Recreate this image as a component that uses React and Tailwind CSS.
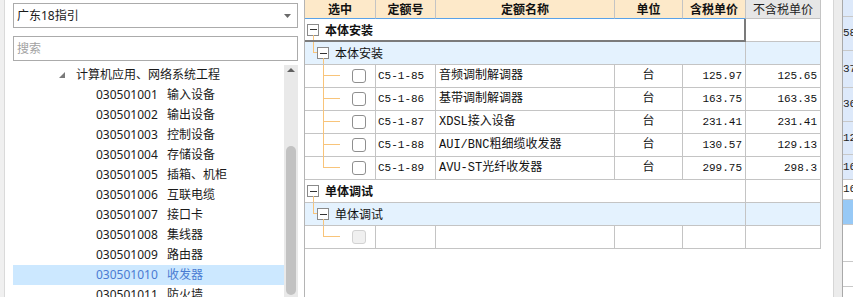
import React from 'react'

/* ── Data ── */
const TREE_ITEMS = [
  ['030501001', '输入设备'],
  ['030501002', '输出设备'],
  ['030501003', '控制设备'],
  ['030501004', '存储设备'],
  ['030501005', '插箱、机柜'],
  ['030501006', '互联电缆'],
  ['030501007', '接口卡'],
  ['030501008', '集线器'],
  ['030501009', '路由器'],
  ['030501010', '收发器'],
  ['030501011', '防火墙'],
]
const SELECTED = '030501010'

const GROUP_1 = [
  ['C5-1-85', '音频调制解调器', '台', '125.97', '125.65'],
  ['C5-1-86', '基带调制解调器', '台', '163.75', '163.35'],
  ['C5-1-87', 'XDSL接入设备', '台', '231.41', '231.41'],
  ['C5-1-88', 'AUI/BNC粗细缆收发器', '台', '130.57', '129.13'],
  ['C5-1-89', 'AVU-ST光纤收发器', '台', '299.75', '298.3'],
]

const SIDE_ROWS = [
  { h: 'h-[17px]', bg: 'bg-[#dde9fa]', t: '' },
  { h: 'h-[34px]', bg: 'bg-[#dde9fa]', t: '58' },
  { h: 'h-[37px]', bg: 'bg-[#dde9fa]', t: '37' },
  { h: 'h-[34px]', bg: 'bg-[#dde9fa]', t: '36' },
  { h: 'h-[33px]', bg: 'bg-[#dde9fa]', t: '12' },
  { h: 'h-[25px]', bg: 'bg-[#dde9fa]', t: '16' },
  { h: 'h-[20px]', bg: 'bg-white', t: '16' },
  { h: 'h-[25px]', bg: 'bg-[#97c9f6]', t: '' },
  { h: 'h-[37px]', bg: 'bg-white', t: '' },
  { h: 'h-[25px]', bg: 'bg-white', t: '' },
  { h: 'h-[25px]', bg: 'bg-white', t: '' },
]

/* ── Small pieces ── */
function MinusBox() {
  return (
    <div className="w-[12px] h-[12px] border border-[#8a8a8a] bg-white flex items-center justify-center shrink-0">
      <div className="w-[7px] h-px bg-[#333]" />
    </div>
  )
}

function Checkbox({ disabled }) {
  return (
    <div
      className={
        disabled
          ? 'w-[14px] h-[14px] rounded-[3px] border border-[#d2d2d2] bg-[#f0f0f0]'
          : 'w-[14px] h-[14px] rounded-[3px] border border-[#8f8f8f] bg-white'
      }
    />
  )
}

/* ── Left tree panel ── */
function LeftPanel() {
  return (
    <div className="flex h-full w-[304px] shrink-0 [font-family:'Noto_Sans','Noto_Sans_CJK_SC',sans-serif] text-[12px] text-[#1a1a1a]">
      <div className="w-[5px] h-full bg-[#f0f0f0] border-r border-[#dadada]" />
      <div className="flex flex-col w-[285px] ml-[8px] pt-[3px] h-full">
        {/* Dropdown */}
        <div className="h-[25px] border border-[#ababab] flex items-center justify-between pl-[3px] pr-[6px]">
          <span>广东18指引</span>
          <svg width="7" height="4" viewBox="0 0 7 4"><polygon points="0,0 7,0 3.5,4" fill="#6a6a6a" /></svg>
        </div>

        {/* Search */}
        <div className="mt-[8px] h-[25px] border border-[#ababab] flex items-center pl-[3px] text-[#a2a2a2]">
          搜索
        </div>

        {/* Tree + scrollbar */}
        <div className="mt-[4px] flex flex-1 min-h-0">
          <div className="flex-1 overflow-hidden">
            <div className="h-[20px] flex items-center pl-[46px]">
              <svg width="6" height="6" viewBox="0 0 6 6"><polygon points="6,0 6,6 0,6" fill="#7a7a7a" /></svg>
              <span className="ml-[11px]">计算机应用、网络系统工程</span>
            </div>
            {TREE_ITEMS.map(([code, name]) => (
              <div
                key={code}
                className={
                  code === SELECTED
                    ? 'h-[20px] flex items-center pl-[83px] bg-[#cce8ff] text-[#4a7bd2]'
                    : 'h-[20px] flex items-center pl-[83px]'
                }
              >
                <span className="w-[71px]">{code}</span>
                <span>{name}</span>
              </div>
            ))}
          </div>
          <div className="w-[14px] h-full bg-[#e9e9e9] flex flex-col items-center">
            <div className="h-[14px] pt-[3px]">
              <svg width="8" height="4" viewBox="0 0 8 4"><polygon points="0,4 8,4 4,0" fill="#606060" /></svg>
            </div>
            <div className="mt-[67px] h-[149px] w-[10px] rounded-full bg-[#c2c2c2]" />
          </div>
        </div>
      </div>
    </div>
  )
}

/* ── Table pieces ── */
const CELL = 'border-r border-b border-[#c4c4c4] h-full'

function GroupRow({ label, focused }) {
  return (
    <div className="flex h-[23px]">
      <div
        className={
          focused
            ? 'relative w-[441px] h-full border-r-2 border-b-2 border-[#7b7b7b] flex items-center pl-[2px]'
            : 'relative w-[441px] h-full border-r border-b border-[#c4c4c4] flex items-center pl-[2px]'
        }
      >
        <MinusBox />
        <span className="ml-[6px] font-bold text-[12px] [font-family:'Noto_Sans_CJK_SC',sans-serif]">{label}</span>
        <div className="absolute left-[8px] top-[16px] bottom-0 w-px bg-[#f8c47a]" />
      </div>
      <div className={`w-[75px] ${CELL}`} />
    </div>
  )
}

function SubRow({ label }) {
  return (
    <div className="flex h-[23px] bg-[#e4f2fe]">
      <div className="relative w-[441px] h-full border-r border-b border-[#c4c4c4] flex items-center pl-[12px]">
        <div className="absolute left-[8px] top-0 h-[11px] w-px bg-[#f8c47a]" />
        <div className="absolute left-[8px] top-[10px] w-[4px] h-px bg-[#f8c47a]" />
        <MinusBox />
        <span className="ml-[6px] text-[12px] [font-family:'Noto_Sans_CJK_SC',sans-serif]">{label}</span>
        <div className="absolute left-[18px] top-[16px] bottom-0 w-px bg-[#f8c47a]" />
      </div>
      <div className={`w-[75px] ${CELL}`} />
    </div>
  )
}

function DataRow({ row, last, disabled }) {
  const [code, name, unit, tax, noTax] = row || ['', '', '', '', '']
  return (
    <div className="flex h-[23px] text-[11px]">
      <div className={`relative w-[71px] ${CELL} flex items-center pl-[47px]`}>
        <div className={last ? 'absolute left-[18px] top-0 h-[11px] w-px bg-[#f8c47a]' : 'absolute left-[18px] top-0 -bottom-px w-px bg-[#f8c47a]'} />
        <div className="absolute left-[18px] top-[10px] w-[17px] h-px bg-[#f8c47a]" />
        <Checkbox disabled={disabled} />
      </div>
      <div className={`w-[60px] ${CELL} flex items-center pl-[2px]`}>{code}</div>
      <div className={`w-[179px] ${CELL} flex items-center pl-[3px] text-[12px]`}>{name}</div>
      <div className={`w-[68px] ${CELL} flex items-center justify-center text-[12px]`}>{unit}</div>
      <div className={`w-[63px] ${CELL} flex items-center justify-end pr-[3px]`}>{tax}</div>
      <div className={`w-[75px] ${CELL} flex items-center justify-end pr-[3px]`}>{noTax}</div>
    </div>
  )
}

function HeaderRow() {
  const head = 'h-full bg-[#fde9c9] border-r border-[#c4c4c4] border-b border-b-[#5aa2e8] flex items-center justify-center font-bold'
  return (
    <div className="flex h-[19px] text-[12px] [font-family:'Noto_Sans_CJK_SC',sans-serif]">
      <div className={`w-[71px] ${head}`}>选中</div>
      <div className={`w-[60px] ${head}`}>定额号</div>
      <div className={`w-[179px] ${head}`}>定额名称</div>
      <div className={`w-[68px] ${head}`}>单位</div>
      <div className={`w-[63px] ${head}`}>含税单价</div>
      <div className="w-[75px] h-full bg-[#e6e6e6] border-r border-b border-[#c4c4c4] flex items-center justify-center text-[#222]">不含税单价</div>
    </div>
  )
}

/* ── Right panel ── */
function RightPanel() {
  return (
    <div className="flex flex-1 h-full">
      <div className="w-[517px] h-full border-l border-[#b4b4b4] text-[#111] [font-family:'Liberation_Mono','Noto_Sans_CJK_SC',monospace]">
        <HeaderRow />
        <GroupRow label="本体安装" focused />
        <SubRow label="本体安装" />
        {GROUP_1.map((r, i) => (
          <DataRow key={r[0]} row={r} last={i === GROUP_1.length - 1} />
        ))}
        <GroupRow label="单体调试" />
        <SubRow label="单体调试" />
        <DataRow last disabled />
      </div>

      {/* Neighbour pane, cut off */}
      <div className="w-[12px] h-full bg-white" />
      <div className="w-[10px] h-full bg-[#ececec] border-l border-[#d6d6d6] border-r border-r-[#a9a9a9]" />
      <div className="flex-1 h-full overflow-hidden [font-family:'Liberation_Mono',monospace] text-[11px] text-[#222]">
        {SIDE_ROWS.map((r, i) => (
          <div key={i} className={`${r.h} ${r.bg} border-b border-[#c8c8c8] flex items-center whitespace-nowrap`}>
            {r.t}
          </div>
        ))}
      </div>
    </div>
  )
}

export default function App() {
  return (
    <div className="w-[853px] h-[297px] overflow-hidden bg-white flex">
      <LeftPanel />
      <RightPanel />
    </div>
  )
}
